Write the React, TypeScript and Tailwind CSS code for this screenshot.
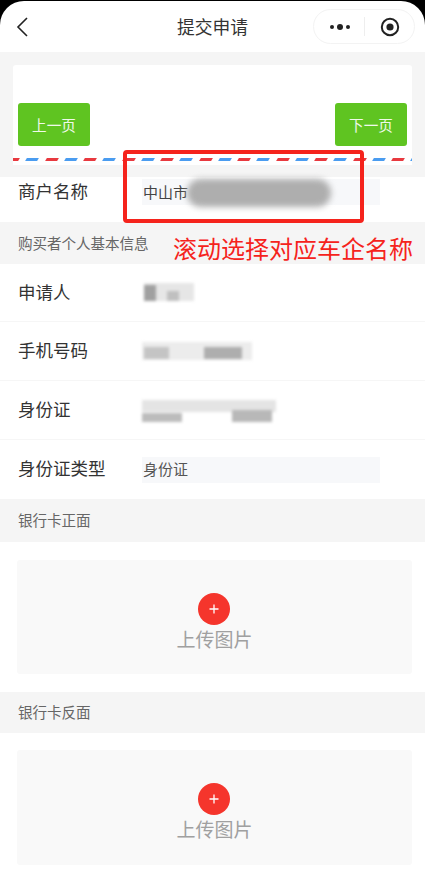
import React from "react";

const font = { fontFamily: '"Noto Sans CJK SC", "Liberation Sans", sans-serif' };

const dashes = Array.from({ length: 22 }, (_, i) => i);

function Row({ label, children, h, shift = "-mt-[1px]", border = true }: { label: string; children: React.ReactNode; h: string; shift?: string; border?: boolean }) {
  return (
    <div className={`${h} flex items-center pl-[18px] bg-white ${border ? "border-b border-[#f6f6f6]" : ""}`}>
      <div className={`w-[124px] text-[17.5px] text-[#333] ${shift}`}>{label}</div>
      {children}
    </div>
  );
}

function Section({ label, h }: { label: string; h: string }) {
  return (
    <div className={`${h} flex items-center pl-[18px] bg-[#f5f5f5] text-[14.6px] text-[#666] -tracking-[0.1px]`}>
      <span className="-mt-[1px]">{label}</span>
    </div>
  );
}

function Upload({ h, mt }: { h: string; mt: string }) {
  return (
    <div className={`${h} ${mt} ml-[17px] mr-[13px] bg-[#f9f9f9] rounded-[3px] flex flex-col items-center pt-[33px]`}>
      <div className="w-8 h-8 -ml-px rounded-full bg-[#f5352c] flex items-center justify-center">
        <svg width="12" height="12" viewBox="0 0 12 12"><path d="M6 1.5v9M1.5 6h9" stroke="#fff" strokeWidth="1.3" /></svg>
      </div>
      <div className="text-[19px] leading-[26px] mt-px text-[#a0a0a0]">上传图片</div>
    </div>
  );
}

const pageBtn = "w-[72px] h-[43px] rounded-[3px] bg-[#5fc421] text-white/90 text-[14.6px] flex items-center justify-center";

export default function App() {
  return (
    <div style={font} className="relative w-[433px] h-[873px] bg-white overflow-hidden">
      <div className="w-[425px] relative">
        {/* nav */}
        <div className="bg-black pt-px">
          <div className="h-[51px] bg-white rounded-t-[24px] flex items-center justify-between pl-[16px] pr-[10px]">
            <svg width="13" height="22" viewBox="0 0 13 22" fill="none">
              <path d="M11 2L2 11L11 20" stroke="#222" strokeWidth="1.6" />
            </svg>
            <div className="text-[17.8px] text-[#333] -mt-[1px] ml-[83px]">提交申请</div>
            <div className="w-[102px] h-[35px] rounded-full border border-[#f3f3f3] flex items-center">
              <svg className="ml-[15px]" width="22" height="8" viewBox="0 0 22 8"><circle cx="3" cy="4" r="2" fill="#222" /><circle cx="11" cy="4" r="3" fill="#222" /><circle cx="19" cy="4" r="2" fill="#222" /></svg>
              <div className="w-px h-[19px] bg-[#eee] ml-[13px]" />
              <svg className="ml-[15px]" width="20" height="20" viewBox="0 0 20 20"><circle cx="10" cy="10" r="8.2" fill="none" stroke="#222" strokeWidth="2" /><circle cx="10" cy="10" r="3.6" fill="#222" /></svg>
            </div>
          </div>
        </div>

        {/* gray area with card */}
        <div className="h-[125px] bg-[#f5f5f5] pt-[13px] px-[13px]">
          <div className="h-[100px] bg-white rounded-t-[3px] flex flex-col">
            <div className="flex justify-between px-[5px] pt-[38px]">
              <div className={pageBtn}>上一页</div>
              <div className={pageBtn}>下一页</div>
            </div>
            <div className="mt-[12px] h-[3px] overflow-hidden flex gap-[7.25px] -ml-0">
              {dashes.map((i) => (
                <div
                  key={i}
                  className={`shrink-0 w-[12px] h-[3px] -skew-x-[30deg] ${i === 0 ? "-ml-[6px]" : ""} ${i % 2 === 0 ? "bg-[#e8393f]" : "bg-[#4a9cf0]"}`}
                />
              ))}
            </div>
          </div>
        </div>

        {/* merchant */}
        <div className="h-[45px] bg-white flex items-start pl-[18px] relative">
          <div className="w-[124px] text-[17.5px] text-[#333] mt-[1px]">商户名称</div>
          <div className="w-[238px] h-[26px] mt-[2px] pl-px bg-[#f7f8fa] text-[15px] text-[#444] flex items-center">中山市</div>
          <div className="absolute left-[187px] top-[2px] w-[144px] h-[28px] rounded-full bg-[#aeaeae] blur-[3px]" />
        </div>

        <Section label="购买者个人基本信息" h="h-[42px]" />

        <Row label="申请人" h="h-[58px]">
          <div className="flex items-end h-[18px] w-[50px] ml-[2px] -mt-[2px] bg-[#e6e6e6] blur-[1.5px]">
            <div className="w-[12px] h-[16px] bg-[#a0a0a0]" />
            <div className="w-[12px] h-[10px] ml-[11px] bg-[#c0c0c0]" />
          </div>
        </Row>
        <Row label="手机号码" h="h-[59px]">
          <div className="flex items-end h-[18px] w-[110px] pb-px bg-[#ececec] blur-[1.5px]">
            <div className="w-[25px] h-[12px] ml-[2px] bg-[#c4c4c4]" />
            <div className="w-[38px] h-[12px] ml-[35px] bg-[#aeaeae]" />
          </div>
        </Row>
        <Row label="身份证" h="h-[59px]">
          <div className="flex items-end h-[22px] w-[134px] mt-[1px] bg-[linear-gradient(#e4e4e4_0,#e4e4e4_55%,transparent_55%)] blur-[1.5px]">
            <div className="w-[40px] h-[9px] bg-[#bcbcbc]" />
            <div className="w-[40px] h-[12px] ml-[50px] bg-[#b8b8b8]" />
          </div>
        </Row>
        <Row label="身份证类型" h="h-[59px]" shift="-mt-[3px]" border={false}>
          <div className="w-[238px] h-[26px] pl-px bg-[#f7f8fa] text-[15px] text-[#555] flex items-center">身份证</div>
        </Row>

        <Section label="银行卡正面" h="h-[43px]" />
        <div className="h-[150px] bg-white pt-px">
          <Upload h="h-[114px]" mt="mt-[17px]" />
        </div>
        <Section label="银行卡反面" h="h-[41px]" />
        <div className="bg-white pt-px">
          <Upload h="h-[115px]" mt="mt-[16px]" />
        </div>
      </div>

      {/* annotations over the page */}
      <div className="absolute left-[123px] top-[150px] w-[241px] h-[73px] border-[4px] border-[#f5231c] rounded-[4px]" />
      <div className="absolute left-[173px] top-[232px] text-[24px] leading-[32px] text-[#f5231c] whitespace-nowrap">滚动选择对应车企名称</div>
    </div>
  );
}
